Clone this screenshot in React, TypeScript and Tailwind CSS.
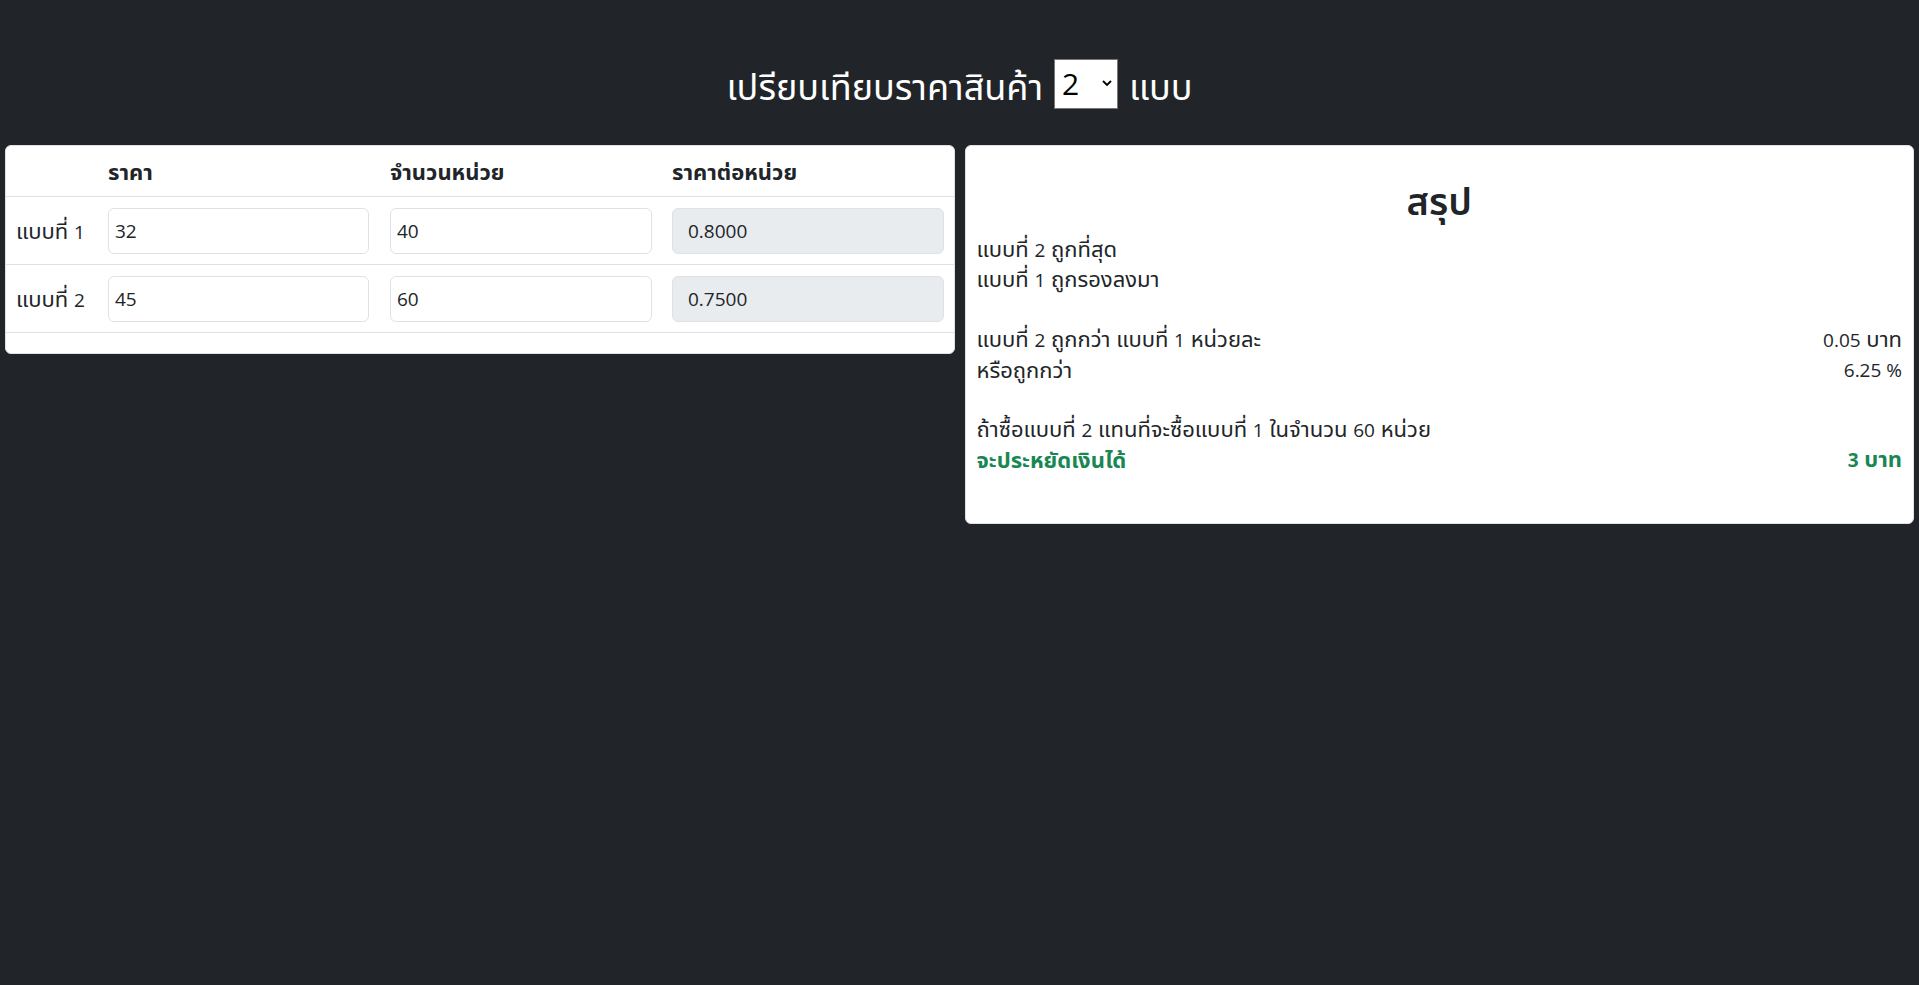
import React from "react";

const rows = [
  { label: "แบบที่ 1", price: "32", qty: "40", unit: "0.8000" },
  { label: "แบบที่ 2", price: "45", qty: "60", unit: "0.7500" },
];

// the Thai fallback font runs small, so Thai gets a larger size than digits
function T({ text }: { text: string }) {
  const parts = text.split(/([0-9][0-9.]*(?: %)?)/);
  return (
    <>
      {parts.map((p, i) =>
        /^[0-9]/.test(p) ? (
          <span key={i} className="text-[19px]">
            {p}
          </span>
        ) : (
          <span key={i}>{p}</span>
        ),
      )}
    </>
  );
}

function SummaryRow({
  left,
  right,
  green,
}: {
  left: string;
  right?: string;
  green?: boolean;
}) {
  return (
    <div
      className={`flex h-[30px] items-center justify-between ${
        green ? "font-bold text-[#198754]" : ""
      }`}
    >
      <span>
        <T text={left} />
      </span>
      {right && (
        <span>
          <T text={right} />
        </span>
      )}
    </div>
  );
}

export default function App() {
  return (
    <div className="min-h-[985px] bg-[#212529] px-[5px] font-['Open_Sans','Noto_Sans','Noto_Sans_Thai',sans-serif] text-[22px] leading-[30px] text-[#212529]">
      <div className="flex h-[145px] items-start justify-center pt-[59px]">
        <div className="flex h-[50px] items-center gap-[11px] text-[36px] text-white">
          <h3 className="mt-[5px] leading-[40px]">เปรียบเทียบราคาสินค้า</h3>
          <div className="relative">
            <select
              defaultValue="2"
              className="h-[50px] w-[64px] appearance-none rounded-none border border-[#767676] bg-white pl-[7px] text-[30px] leading-[40px] text-black"
            >
              <option value="1">1</option>
              <option value="2">2</option>
              <option value="3">3</option>
            </select>
            <svg
              className="pointer-events-none absolute right-[6px] top-[21px] h-[6px] w-[10px]"
              viewBox="0 0 10 6"
              fill="none"
              stroke="black"
              strokeWidth="1.8"
            >
              <path d="M1 1l4 4 4-4" />
            </svg>
          </div>
          <h3 className="mt-[5px] leading-[40px]">แบบ</h3>
        </div>
      </div>

      <div className="grid grid-cols-2 items-start gap-[10px]">
        <div className="overflow-hidden rounded-[6px] border border-[#dee2e6] bg-white pb-[20px]">
          <div className="grid h-[51px] grid-cols-[94px_282px_282px_1fr] items-center border-b border-[#dee2e6] font-bold">
            <div />
            <div className="px-[8px]">ราคา</div>
            <div className="px-[8px]">จำนวนหน่วย</div>
            <div className="px-[8px]">ราคาต่อหน่วย</div>
          </div>
          {rows.map((r) => (
            <div
              key={r.label}
              className="grid h-[68px] grid-cols-[94px_282px_282px_1fr] items-center border-b border-[#dee2e6]"
            >
              <div className="pl-[10px]">
                <T text={r.label} />
              </div>
              <div className="px-[8px]">
                <input
                  defaultValue={r.price}
                  className="h-[46px] w-[261px] rounded-[6px] border border-[#dee2e6] px-[6px] text-[19px] outline-none"
                />
              </div>
              <div className="px-[8px]">
                <input
                  defaultValue={r.qty}
                  className="h-[46px] w-[262px] rounded-[6px] border border-[#dee2e6] px-[6px] text-[19px] outline-none"
                />
              </div>
              <div className="pl-[8px] pr-[10px]">
                <input
                  readOnly
                  value={r.unit}
                  className="h-[46px] w-full rounded-[6px] border border-[#dee2e6] bg-[#e9ecef] px-[15px] text-[19px] outline-none"
                />
              </div>
            </div>
          ))}
        </div>

        <div className="rounded-[6px] border border-[#dee2e6] bg-white px-[11px] pb-[49px] pt-[10px]">
          <h2 className="mb-[10px] mt-[20px] text-center text-[38px] font-semibold leading-[48px]">
            สรุป
          </h2>
          <SummaryRow left="แบบที่ 2 ถูกที่สุด" />
          <SummaryRow left="แบบที่ 1 ถูกรองลงมา" />
          <div className="h-[30px]" />
          <SummaryRow left="แบบที่ 2 ถูกกว่า แบบที่ 1 หน่วยละ" right="0.05 บาท" />
          <SummaryRow left="หรือถูกกว่า" right="6.25 %" />
          <div className="h-[30px]" />
          <SummaryRow left="ถ้าซื้อแบบที่ 2 แทนที่จะซื้อแบบที่ 1 ในจำนวน 60 หน่วย" />
          <SummaryRow left="จะประหยัดเงินได้" right="3 บาท" green />
        </div>
      </div>
    </div>
  );
}
